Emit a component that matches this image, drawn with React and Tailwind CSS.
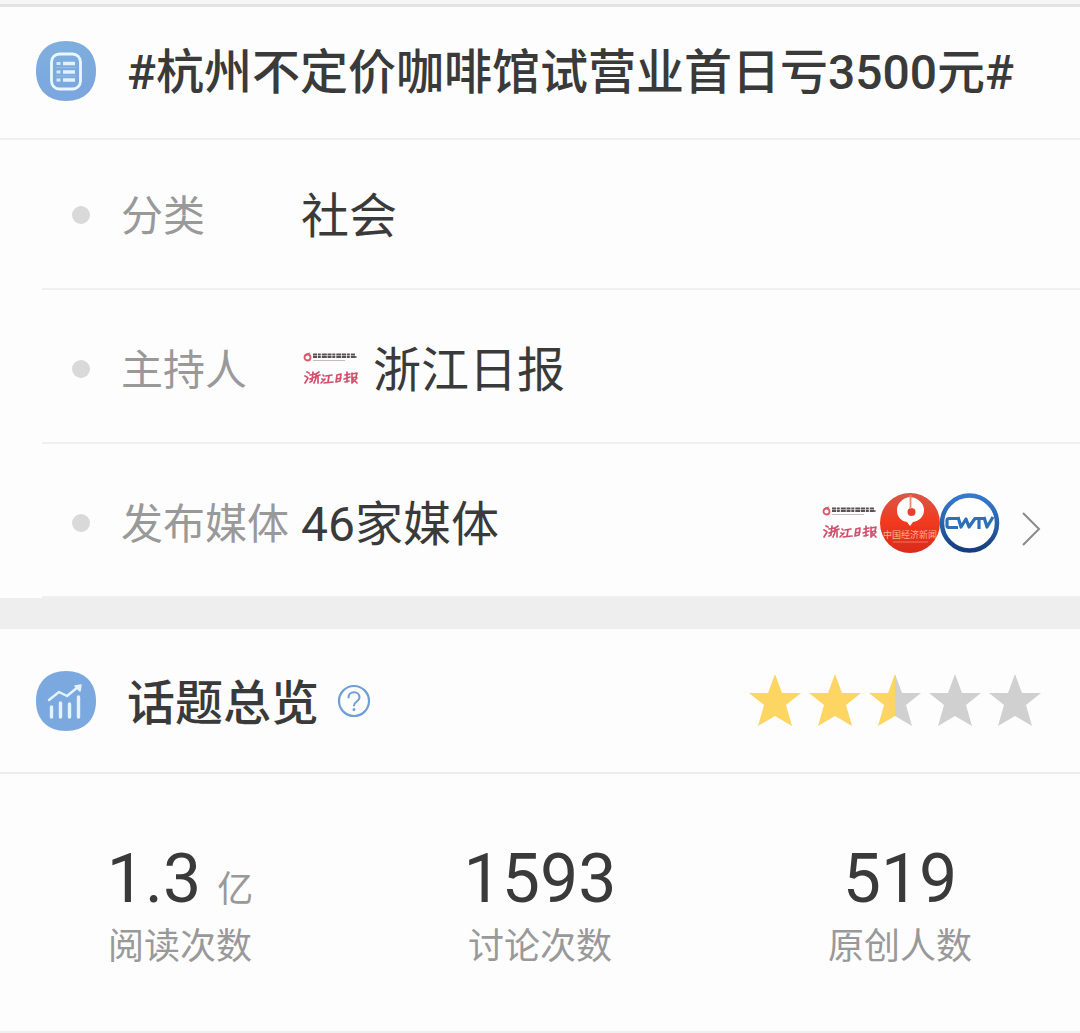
const infoLabel = "w-[180px] shrink-0 pt-1 text-[42px] leading-[60px] text-[#999]";

const stats = [
  { label: "阅读次数", value: "1.3", unit: "亿" },
  { label: "讨论次数", value: "1593" },
  { label: "原创人数", value: "519" },
];

const STAR = "31,3 38,22 57,22 42,34 48,55 31,45 14,55 20,34 5,22 24,22";

function ListIcon() {
  return (
    <svg viewBox="0 0 60 60" className="size-[60px] shrink-0" fill="none" aria-hidden="true">
      <defs>
        <linearGradient id="listBg" x1="0" y1="0" x2="0.3" y2="1">
          <stop offset="0" stopColor="#7fb0de" />
          <stop offset="1" stopColor="#7ba6de" />
        </linearGradient>
      </defs>
      <path d="M30 0C48.500 0 60 11.500 60 30S48.500 60 30 60 0 48.500 0 30 11.500 0 30 0Z" fill="url(#listBg)" />
      <rect x="15.500" y="13" width="29" height="35" rx="8" stroke="#e9f8ff" strokeWidth="2.800" />
      <path d="M20.500 22.500h4M20.500 31h4M20.500 39h4" stroke="#d5eafb" strokeWidth="3" />
      <path d="M27 22.500h12M27 31h12M27 39h12" stroke="#e0f2ff" strokeWidth="3.600" />
      <path d="M20 26.500h20M20 35h20" stroke="#93bbe6" strokeWidth="1" />
    </svg>
  );
}

function ChartIcon() {
  return (
    <svg viewBox="0 0 60 60" className="size-[60px] shrink-0" fill="none" aria-hidden="true">
      <path d="M30 0C48.500 0 60 11.500 60 30S48.500 60 30 60 0 48.500 0 30 11.500 0 30 0Z" fill="#7ba9df" />
      <path d="M15.500 36v10M24.500 32v14M33.500 33v13M42.500 26v20" stroke="#e4f3fd" strokeWidth="3.400" strokeLinecap="round" />
      <path d="M13 29l10-8 8 4 11-9" stroke="#e4f3fd" strokeWidth="2.400" strokeLinecap="round" strokeLinejoin="round" />
      <path d="M39 15l6-1-1 6z" fill="#e4f3fd" stroke="#e4f3fd" strokeWidth="1.500" strokeLinejoin="round" />
    </svg>
  );
}

function DailyLogo() {
  return (
    <svg viewBox="0 0 60 60" className="size-[60px] shrink-0" role="img" aria-label="浙江日报">
      <circle cx="6.500" cy="18.500" r="3" fill="none" stroke="#d8596b" strokeWidth="1.800" />
      <path d="M5 15l4-1" stroke="#d8596b" strokeWidth="1.200" />
      <path d="M12 15.500h42M12 18h44" stroke="#5a5154" strokeWidth="2" strokeDasharray="4 0.800 3 1 5 0.700" />
      <path d="M12 21.500h32" stroke="#c2bebf" strokeWidth="1" />
      {/* brush lettering of the masthead */}
      <g fill="none" stroke="#d2506c" strokeWidth="1.700" strokeLinecap="round" strokeLinejoin="round">
        <path d="M6 33l2 1M4 37l2 1M4 44l3-5M9 36l5-1M12 33l-1 9-2 1M9 40l5-2M18 33l-3 2v4l-2 5M15 37l4-1M17 37v7" />
        <path d="M22 36l1 1M21 40l2 1M20 44l4-4M25 37l6-1M28 37l-1 6M23 44l9-1" />
        <path d="M36 36l-1 7 4-1 1-7-4 1M36 40l4-1" />
        <path d="M44 36l5-1M46 33v10M43 40l6-2M44 43l4-1M51 34v10M51 35l5-1-1 4-4 1M52 40l4 4M56 39l-5 5" />
      </g>
    </svg>
  );
}

function RedLogo() {
  return (
    <svg viewBox="0 0 60 60" className="size-[60px] shrink-0" role="img" aria-label="中国经济新闻">
      <defs>
        <linearGradient id="redBg" x1="0" y1="0" x2="0" y2="1">
          <stop offset="0" stopColor="#d9564a" />
          <stop offset="0.450" stopColor="#f23b20" />
          <stop offset="1" stopColor="#d92a1b" />
        </linearGradient>
      </defs>
      <circle cx="30" cy="30" r="30" fill="url(#redBg)" />
      <path d="M30 4C22 5 17 11 17 17c0 7 4 11 10 12l3 4 3-4c6-1 11-5 11-12 0-6-5-12-14-13z" fill="#fff" />
      <circle cx="31.500" cy="19" r="4" fill="#e8402c" />
      <path d="M30.500 2v14" stroke="#ee8273" strokeWidth="1.800" />
      <text x="30" y="45" textAnchor="middle" fontSize="9" fill="#ffb093">中国经济新闻</text>
      <path d="M13 49h35" stroke="#f47560" strokeWidth="1" />
    </svg>
  );
}

function CwtvLogo() {
  return (
    <svg viewBox="0 0 60 60" className="size-[60px] shrink-0" role="img" aria-label="CWTV">
      <defs>
        <linearGradient id="ring" x1="0" y1="0" x2="0" y2="1">
          <stop offset="0" stopColor="#3479cd" />
          <stop offset="0.500" stopColor="#2863ae" />
          <stop offset="1" stopColor="#163d7c" />
        </linearGradient>
      </defs>
      <circle cx="29.500" cy="30" r="27.500" fill="#fff" stroke="url(#ring)" strokeWidth="4.500" />
      <g fill="none" stroke="#2c6fba" strokeWidth="3.200" strokeLinejoin="round">
        <path d="M18 25.500H9q-2 0-2 2v5q0 2 2 2h9" />
        <path d="M18 24l3 10 5-8 3 8 6-8.500h10M39 25v11M44 24l3 10 6-10" />
      </g>
    </svg>
  );
}

function InfoRow({ label, logo, value, children }) {
  return (
    <div className="ml-[42px] flex h-[154px] items-center border-b-2 border-[#f0f0f0] pt-[6px] pl-[30px]">
      <span className="mr-[31px] size-[18px] shrink-0 rounded-full bg-[#d9d9d9]" />
      <dt className={infoLabel}>{label}</dt>
      <dd className="flex flex-1 items-center text-[48px] leading-[64px] whitespace-nowrap">
        {logo && <span className="mr-3">{logo}</span>}
        <span className="pt-1">{value}</span>
        {children}
      </dd>
    </div>
  );
}

function Rating() {
  return (
    <div className="ml-auto flex" role="img" aria-label="2.5 / 5">
      {[1, 1, 0.5, 0, 0].map((fill, i) => (
        <svg key={i} viewBox="0 0 60 60" className="size-[60px]">
          <defs>
            <linearGradient id={`star${i}`}>
              <stop offset={fill} stopColor="#fdd563" />
              <stop offset={fill} stopColor="#d0d0d0" />
            </linearGradient>
          </defs>
          <polygon points={STAR} fill={`url(#star${i})`} />
        </svg>
      ))}
    </div>
  );
}

export default function App() {
  return (
    <main className="min-h-screen bg-[#fdfdfd] font-[Roboto,'Noto_Sans_CJK_SC',sans-serif] text-[#3a3a3a]">
      <div className="h-[7px] border-b-3 border-[#e3e3e3] bg-[#f6f6f6]" />

      {/* Topic */}
      <section>
        <header className="flex h-[133px] items-center gap-[31px] border-b-2 border-[#efefef] px-9 pb-1">
          <ListIcon />
          <h1 className="pt-1 text-[48px] leading-[64px] font-medium whitespace-nowrap">
            #杭州不定价咖啡馆试营业首日亏3500元#
          </h1>
        </header>
        <dl className="-mt-1">
          <InfoRow label="分类" value="社会" />
          <InfoRow label="主持人" value="浙江日报" logo={<DailyLogo />} />
          <InfoRow label="发布媒体" value="46家媒体">
            <a href="#media" aria-label="46家媒体" className="mr-9 ml-auto flex items-center">
              <DailyLogo />
              <RedLogo />
              <CwtvLogo />
              <svg viewBox="0 0 24 36" className="mt-3 ml-5 h-9 w-6" fill="none" aria-hidden="true">
                <path d="M3 2l16 16L3 34" stroke="#8a8a8a" strokeWidth="2" />
              </svg>
            </a>
          </InfoRow>
        </dl>
      </section>

      <div className="h-[31px] bg-[#eeeeee]" />

      {/* Overview */}
      <section>
        <header className="flex h-[145px] items-center border-b-2 border-[#ececec] px-9">
          <ChartIcon />
          <h2 className="ml-[31px] pt-[6px] text-[48px] leading-[64px] font-medium">话题总览</h2>
          <button type="button" aria-label="说明" className="ml-[18px]">
            <svg viewBox="0 0 34 34" className="size-[34px]" fill="none" stroke="#6f9fd8">
              <circle cx="17" cy="17" r="15" strokeWidth="2.200" />
              <path d="M11.500 13.500c0-7 11-7 11 0 0 4-5.500 4-5.500 8" strokeWidth="2" strokeLinecap="round" />
              <circle cx="17" cy="25.500" r="0.800" strokeWidth="1.400" />
            </svg>
          </button>
          <Rating />
        </header>
        <dl className="grid h-[259px] grid-cols-3 border-b-2 border-[#efefef] pt-[62px] text-center">
          {stats.map((s) => (
            <div key={s.label} className="flex flex-col-reverse justify-end">
              <dt className="text-[36px] leading-[50px] text-[#999]">{s.label}</dt>
              <dd className="text-[68px] leading-[86px]">
                {s.value}
                {s.unit && <span className="ml-4 text-[36px] leading-none text-[#999]">{s.unit}</span>}
              </dd>
            </div>
          ))}
        </dl>
      </section>
    </main>
  );
}
